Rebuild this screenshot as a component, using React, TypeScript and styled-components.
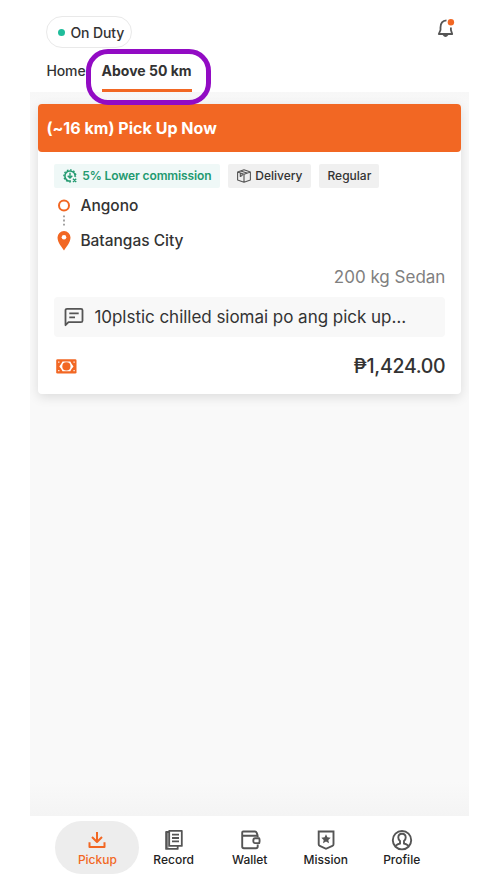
import React from 'react';
import styled, { createGlobalStyle, css } from 'styled-components';

const ORANGE = '#f26723';
const INK = '#333333';
const ICON = '#555555';

const GlobalStyle = createGlobalStyle`
  * { box-sizing: border-box; }
  body {
    margin: 0;
    background: #fff;
    font-family: Inter, "Liberation Sans", sans-serif;
    color: ${INK};
  }
  svg { display: block; flex: none; }
`;

const Screen = styled.div`
  width: 439px;
  height: 888px;
  margin-left: 30.4px;
  display: flex;
  flex-direction: column;
  overflow: hidden;
`;

const Header = styled.header`
  height: 92px;
  padding: 16px 12px 0 16px;
  background: #fff;
`;

const TopRow = styled.div`
  display: flex;
  justify-content: space-between;
  align-items: flex-start;
  height: 32px;
`;

const StatusPill = styled.div`
  display: flex;
  align-items: center;
  gap: 5px;
  width: 86px;
  height: 32px;
  padding-left: 11px;
  border: 1px solid #e9e9e9;
  border-radius: 16px;
  font-size: 14px;
  font-weight: 500;
  letter-spacing: -0.12px;
  white-space: nowrap;
`;

const StatusDot = styled.span`
  width: 7px;
  height: 7px;
  border-radius: 50%;
  background: #1fbd9b;
`;

const Tabs = styled.nav`
  display: flex;
  gap: 16px;
  height: 44px;
`;

const Tab = styled.div<{ $active?: boolean }>`
  position: relative;
  width: ${p => (p.$active ? 90 : 39.2)}px;
  height: 44px;
  font-size: 14px;
  font-weight: ${p => (p.$active ? 700 : 500)};
  letter-spacing: ${p => (p.$active ? 0 : -0.1)}px;
  line-height: 46px;
  white-space: nowrap;
  ${p => p.$active && css`border-bottom: 3px solid ${ORANGE};`}
`;

const Highlight = styled.span`
  position: absolute;
  left: -15.5px;
  top: 0.5px;
  width: 125px;
  height: 56px;
  border: 5.5px solid #920bc4;
  border-radius: 22px;
  z-index: 3;
`;

const Content = styled.main`
  height: 724px;
  padding: 12px 8px 0;
  background: linear-gradient(#f7f7f7, #f9f9f9 18px, #f9f9f9 690px, #f4f4f4);
`;

const Card = styled.article`
  height: 290px;
  border-radius: 4px;
  background: #fff;
  box-shadow: 0 3px 12px rgba(0, 0, 0, 0.12);
`;

const CardHeader = styled.h1`
  height: 48px;
  margin: 0;
  padding-left: 8px;
  border-radius: 4px;
  background: ${ORANGE};
  color: #fff;
  font-size: 16px;
  font-weight: 700;
  letter-spacing: 0.03px;
  line-height: 48px;
`;

const CardBody = styled.div`
  padding: 12px 16px 0;
`;

const Tags = styled.div`
  display: flex;
  gap: 8px;
`;

const Tag = styled.span<{ $w: number; $green?: boolean }>`
  display: flex;
  align-items: center;
  justify-content: center;
  gap: ${p => (p.$green ? 5 : 4)}px;
  width: ${p => p.$w}px;
  height: 24px;
  padding-bottom: 1px;
  border-radius: 2px;
  font-size: 12px;
  font-weight: ${p => (p.$green ? 600 : 500)};
  letter-spacing: ${p => (p.$green ? -0.11 : 0)}px;
  white-space: nowrap;
  background: ${p => (p.$green ? '#eff8f7' : '#f0f0f0')};
  color: ${p => (p.$green ? '#239a70' : INK)};
`;

const Route = styled.div`
  display: flex;
  gap: 9px;
  height: 79px;
  padding: 11px 0 0 3px;
`;

const Stops = styled.div`
  font-size: 15.5px;
  font-weight: 500;
`;

const Stop = styled.div`
  height: 35px;
  line-height: 14px;
`;

const Vehicle = styled.div`
  height: 30px;
  text-align: right;
  font-size: 17px;
  line-height: 21px;
  color: #808080;
`;

const Note = styled.div`
  display: flex;
  align-items: center;
  height: 40px;
  padding-left: 10px;
  border-radius: 4px;
  background: #f8f8f8;
  font-size: 17px;
  letter-spacing: -0.03px;
  white-space: nowrap;
`;

const NoteText = styled.span`
  margin-left: 10px;
`;

const Payment = styled.div`
  display: flex;
  align-items: center;
  justify-content: space-between;
  height: 58px;
  padding-left: 2px;
  font-size: 19.5px;
  font-weight: 500;
  letter-spacing: -0.3px;
`;

const BottomNav = styled.nav`
  display: grid;
  grid-template-columns: 84px repeat(4, 76px);
  height: 72px;
  padding: 5px 0 0 25px;
  background: #fff;
`;

const NavItem = styled.div<{ $active?: boolean }>`
  display: flex;
  flex-direction: column;
  align-items: center;
  height: 53px;
  padding-top: 7px;
  border-radius: 27px;
  font-size: 12px;
  font-weight: 500;
  line-height: 16px;
  color: ${p => (p.$active ? ORANGE : '#222')};
  ${p => p.$active ? css`background: #ededed;` : css`margin: 0 3.7px 0 -3.7px;`}
`;

const BellIcon = () => (
  <svg width="24" height="24" viewBox="0 0 24 24" fill="none">
    <path d="M13.5 4.4C8.8 4.8 7.5 8 7.5 11.5V14L5.8 18H19.2L17.9 14V11.5" stroke={ICON} strokeWidth="1.8" strokeLinejoin="round" />
    <path d="M9.5 18.8H15.5Q12.5 23.2 9.5 18.8" fill={ICON} />
    <circle cx="17.9" cy="6.2" r="3.2" fill={ORANGE} />
  </svg>
);

const CommissionIcon = () => (
  <svg width="14" height="14" viewBox="0 0 14 14" fill="none" stroke="#239a70">
    <path d="M8 12A5.1 5.1 0 1 1 12 8" strokeWidth="1.5" />
    <path d="M7.8 12.8A6 6 0 1 1 12.8 7.8" strokeWidth="1.3" strokeDasharray="1.7 1.6" />
    <path d="M7 3.8V9M4.7 6.8 7 9 9.3 6.8M10 9.8l3.2 3.2M13.2 9.8 10 13" strokeWidth="1.4" />
  </svg>
);

const BoxIcon = () => (
  <svg width="14" height="14" viewBox="0 0 14 14" fill="none" stroke={ICON} strokeWidth="1.1" strokeLinejoin="round">
    <path d="M.6 3 7 .7 13.4 3v8L7 13.3.6 11ZM.6 3 7 5.3 13.4 3M7 5.3v8M3.6 1.9 10 4.1M3.3 4v3.4l1.8-.9V4.7" />
  </svg>
);

const RouteIcon = () => (
  <svg width="14" height="60" viewBox="0 0 14 60" fill="none">
    <circle cx="7" cy="6.5" r="5" stroke={ORANGE} strokeWidth="2" />
    <path d="M7 16.4v10.5" stroke="#999" strokeWidth="1.8" strokeDasharray="1.8 2.4" />
    <path d="M7 51.5C5 48.4.5 43.5.5 38.5a6.5 6.5 0 0 1 13 0C13.5 43.5 9 48.4 7 51.5Z" fill={ORANGE} />
    <circle cx="7" cy="38.3" r="2.3" fill="#fff" />
  </svg>
);

const NoteIcon = () => (
  <svg width="20" height="20" viewBox="0 0 20 20" fill="none" stroke={ICON} strokeWidth="1.8" strokeLinejoin="round">
    <path d="M1.5 18.2V3.3A1.5 1.5 0 0 1 3 1.8h14a1.5 1.5 0 0 1 1.5 1.5v10.4a1.5 1.5 0 0 1-1.5 1.5H4.5Z" />
    <path d="M5.3 6.3h9.4M5.3 10.3H11" />
  </svg>
);

const CashIcon = () => (
  <svg width="21" height="15" viewBox="0 0 21 15">
    <rect x=".2" y=".3" width="20.3" height="14.2" rx="1.3" fill={ORANGE} />
    <path d="M6.5 2.6h7.8l1.4 2.5 1.8 2.3-1.8 2.3-1.4 2.5H6.5L5.1 9.7 3.3 7.4l1.8-2.3Z" fill="#fff" />
    <circle cx="10.4" cy="7.4" r="4.1" fill={ORANGE} />
    <path d="M2.2 3.1h1.2M17.5 3.1h1.2M2.2 11.7h1.2M17.5 11.7h1.2" stroke="#fff" strokeWidth="1.2" />
  </svg>
);

const PickupIcon = () => (
  <svg width="24" height="24" viewBox="0 0 24 24" fill="none" stroke={ORANGE} strokeWidth="2">
    <path d="M12 4v10M7 9l5 5 5-5M4.5 14.3V19h15v-4.7" strokeLinejoin="round" />
  </svg>
);

const RecordIcon = () => (
  <svg width="24" height="24" viewBox="0 0 24 24" fill="none" stroke={ICON} strokeWidth="1.8" strokeLinejoin="round">
    <path d="M7.2 2.8h12.6v15.1H7.2ZM7.2 4H4.1v16.9h11.6v-3M10 6.7h7M10 10h7M10 13.3h7" />
    <path d="M5.8 4v16" strokeWidth="1" />
  </svg>
);

const WalletIcon = () => (
  <svg width="24" height="24" viewBox="0 0 24 24" fill="none" stroke={ICON} strokeWidth="1.9" strokeLinejoin="round">
    <path d="M19.7 9.2V7.7H4.2V4.5q0-1 1-1H17q1.2 0 1.6 1.2l1.1 3M4.2 7.5v11q0 1.7 1.7 1.7h12.1q1.7 0 1.7-1.7v-2" />
    <path d="M21.2 10.3h-4.1q-1.8 0-1.8 2.4t1.8 2.4h4.1q.8-2.4 0-4.8Z" />
  </svg>
);

const MissionIcon = () => (
  <svg width="24" height="24" viewBox="0 0 24 24" fill="none">
    <path d="M4.7 3.5h14.8v12.7q0 1.2-1.1 1.7L12 20.8 5.8 17.9q-1.1-.5-1.1-1.7Z" stroke={ICON} strokeWidth="1.9" />
    <path d="m12 6.3 1.4 3 3.3.4-2.4 2.2.7 3.3-3-1.7L9 15.2l.7-3.3-2.4-2.2 3.3-.4Z" fill={ICON} />
  </svg>
);

const ProfileIcon = () => (
  <svg width="24" height="24" viewBox="0 0 24 24" fill="none" stroke={ICON} strokeWidth="1.9">
    <circle cx="12" cy="12.2" r="9.2" />
    <path d="M10 14.1V13Q8.3 11.7 8.3 9.5q0-3.8 3.7-3.8t3.7 3.8q0 2.2-1.7 3.5v2.5q2.6.6 4.5 2.4M10 13v2.5q-2.6.6-4.5 2.4" />
  </svg>
);

const navItems = [
  { label: 'Pickup', Icon: PickupIcon },
  { label: 'Record', Icon: RecordIcon },
  { label: 'Wallet', Icon: WalletIcon },
  { label: 'Mission', Icon: MissionIcon },
  { label: 'Profile', Icon: ProfileIcon },
];

export default function App() {
  return (
    <>
      <GlobalStyle />
      <Screen>
        <Header>
          <TopRow>
            <StatusPill><StatusDot />On Duty</StatusPill>
            <BellIcon />
          </TopRow>
          <Tabs>
            <Tab>Home</Tab>
            <Tab $active>Above 50 km<Highlight /></Tab>
          </Tabs>
        </Header>
        <Content>
          <Card>
            <CardHeader>(~16 km) Pick Up Now</CardHeader>
            <CardBody>
              <Tags>
                <Tag $w={166} $green><CommissionIcon />5% Lower commission</Tag>
                <Tag $w={83}><BoxIcon />Delivery</Tag>
                <Tag $w={60}>Regular</Tag>
              </Tags>
              <Route>
                <RouteIcon />
                <Stops>
                  <Stop>Angono</Stop>
                  <Stop>Batangas City</Stop>
                </Stops>
              </Route>
              <Vehicle>200 kg Sedan</Vehicle>
              <Note><NoteIcon /><NoteText>10plstic chilled siomai po ang pick up…</NoteText></Note>
              <Payment><CashIcon />₱1,424.00</Payment>
            </CardBody>
          </Card>
        </Content>
        <BottomNav>
          {navItems.map(({ label, Icon }, i) => (
            <NavItem key={label} $active={i === 0}><Icon />{label}</NavItem>
          ))}
        </BottomNav>
      </Screen>
    </>
  );
}
